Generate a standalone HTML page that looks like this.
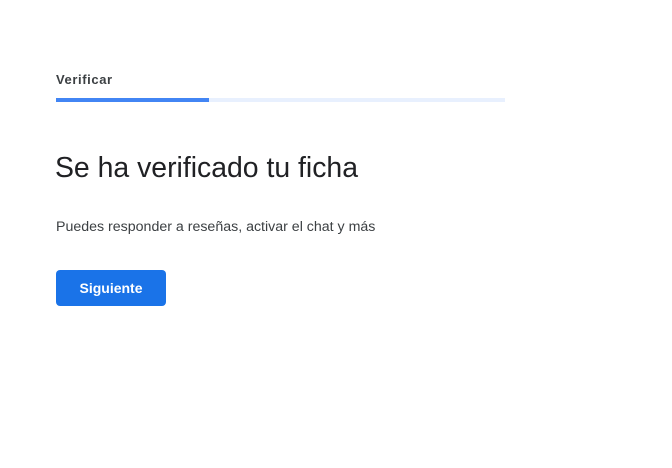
<!DOCTYPE html>
<html><head><meta charset="utf-8"><style>
body{margin:0;width:672px;height:468px;background:#fff;font-family:"Liberation Sans",Arial,sans-serif;position:relative;overflow:hidden}
.t{position:absolute;left:56px;top:72px;font-size:13px;font-weight:bold;color:#3c4043;letter-spacing:.6px}
.bar{position:absolute;left:56px;top:98px;width:449px;height:4px;background:#e8f0fe}
.bar div{width:153px;height:4px;background:#4285f4}
h1{position:absolute;left:55px;top:152px;margin:0;font-size:28.4px;font-weight:normal;color:#202124;white-space:nowrap}
p{position:absolute;left:56px;top:219px;margin:0;font-size:14.2px;color:#3c4043}
.b{position:absolute;left:56px;top:270px;width:110px;height:36px;background:#1a73e8;border-radius:4px;color:#fff;font-size:14px;font-weight:bold;text-align:center;line-height:36px}
</style></head><body>
<div class="t">Verificar</div>
<div class="bar"><div></div></div>
<h1>Se ha verificado tu ficha</h1>
<p>Puedes responder a reseñas, activar el chat y más</p>
<div class="b">Siguiente</div>
</body></html>
